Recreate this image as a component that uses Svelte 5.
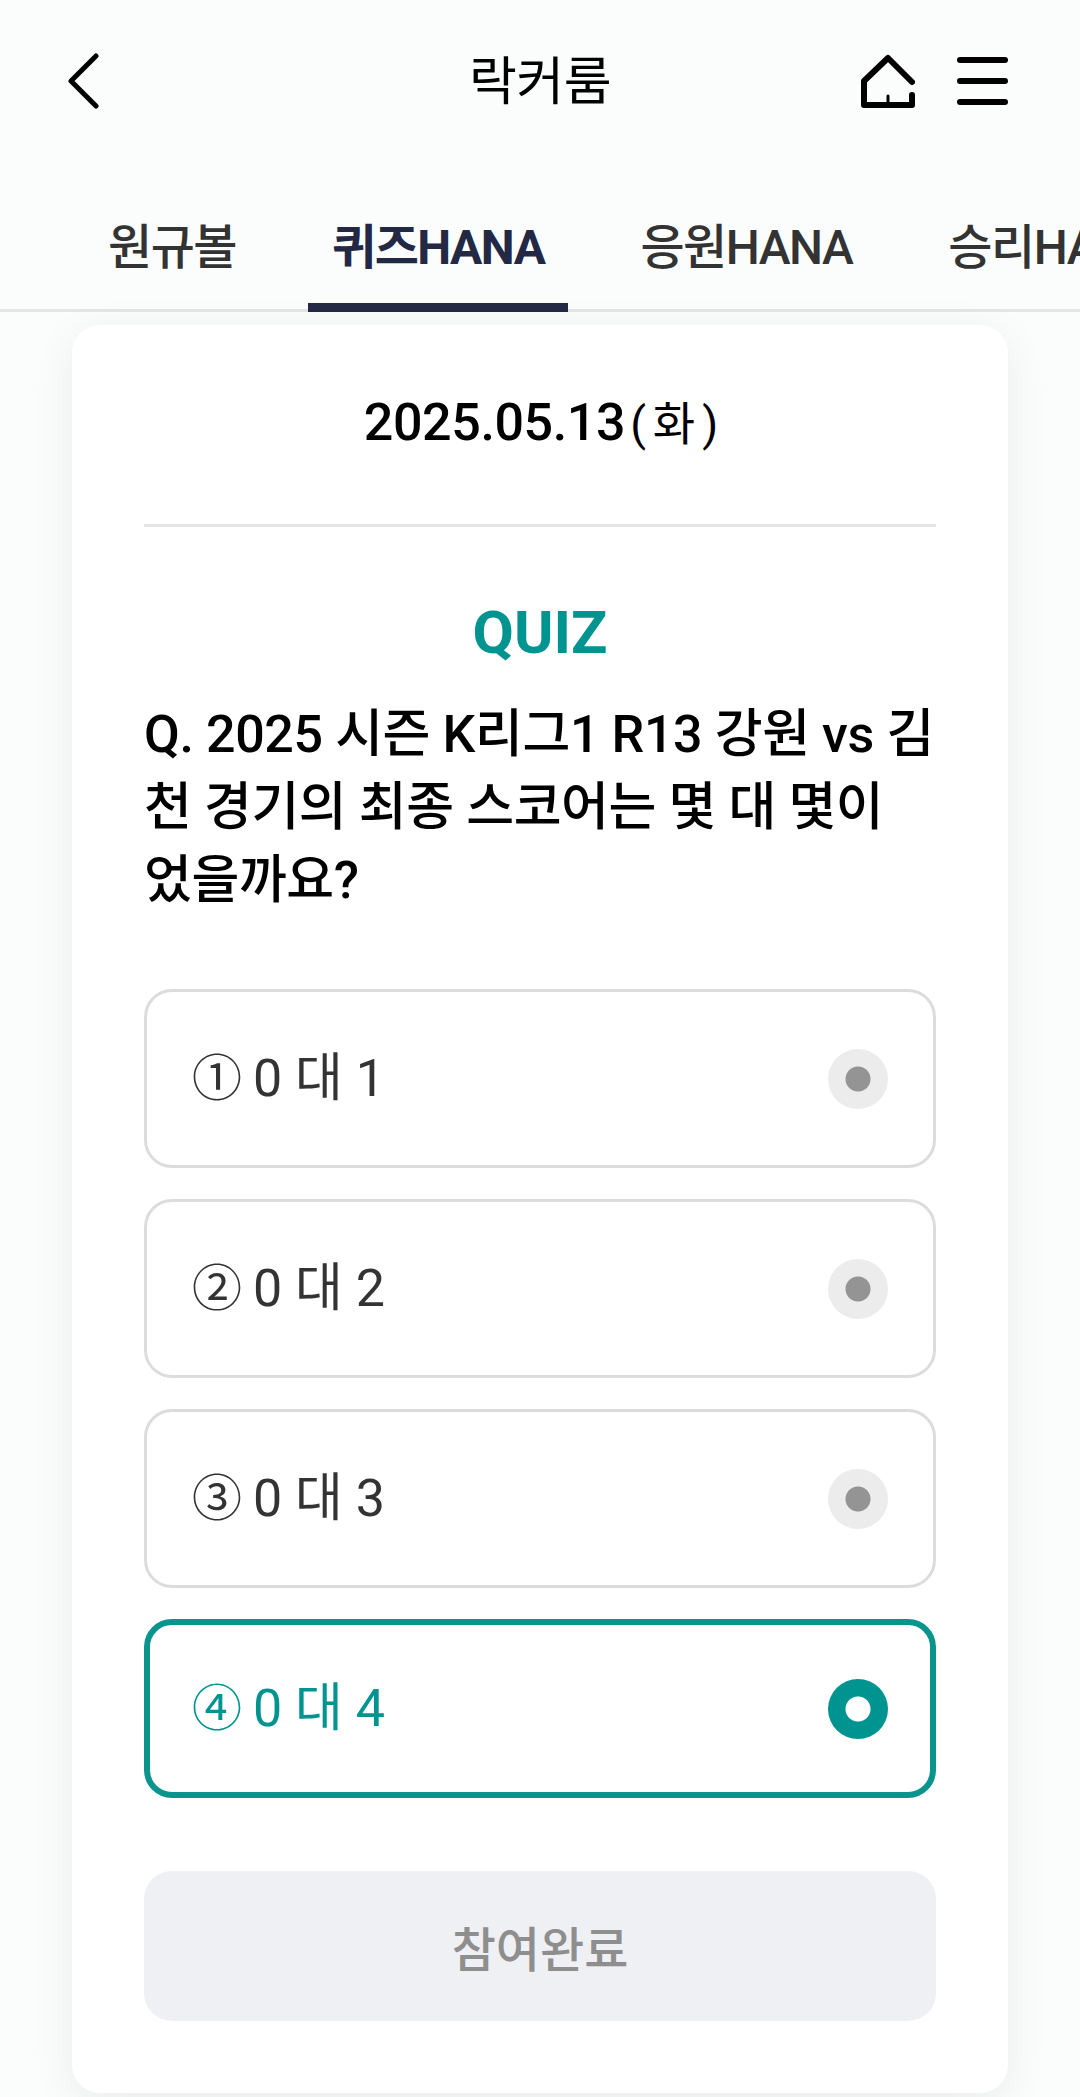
<script>
  const tabs = ['원규볼', '퀴즈HANA', '응원HANA', '승리HANA'];
  const options = [
    { mark: '①', label: '0 대 1' },
    { mark: '②', label: '0 대 2' },
    { mark: '③', label: '0 대 3' },
    { mark: '④', label: '0 대 4' }
  ];
  let selected = 3;
</script>

<div class="page">
  <header class="topbar">
    <svg class="back" viewBox="0 0 36 60" width="36" height="60">
      <path d="M32 7 L7 32 L32 57" fill="none" stroke="#000" stroke-width="5" stroke-linecap="round" stroke-linejoin="round" />
    </svg>
    <h1>락커룸</h1>
    <div class="actions">
      <svg viewBox="0 0 54 54" width="54" height="54">
        <path d="M51 28 L27 4 L3 27 V51 H51 V41" fill="none" stroke="#000" stroke-width="6" stroke-linecap="round" stroke-linejoin="round" />
        <path d="M27 42 V51" fill="none" stroke="#000" stroke-width="3" stroke-linecap="round" />
      </svg>
      <div class="menu">
        <span></span>
        <span></span>
        <span></span>
      </div>
    </div>
  </header>

  <nav class="tabs">
    {#each tabs as tab, i}
      <span class="tab" class:active={i === 1}>{tab}</span>
    {/each}
  </nav>

  <main class="card">
    <div class="date">2025.05.13<span class="day">(화)</span></div>
    <h2>QUIZ</h2>
    <p class="question">Q. 2025 시즌 K리그1 R13 강원 vs 김천 경기의 최종 스코어는 몇 대 몇이 었을까요?</p>

    <div class="options">
      {#each options as opt, i}
        <button class="option" class:selected={i === selected} onclick={() => (selected = i)}>
          <span class="text"><span class="mark">{opt.mark}</span>{opt.label}</span>
          <span class="radio"></span>
        </button>
      {/each}
    </div>

    <button class="submit">참여완료</button>
  </main>
</div>

<style>
  :global(body) {
    background: #f4f5f5;
  }

  .page {
    width: 1080px;
    height: 2097px;
    overflow: hidden;
    background: #fbfdfc;
    font-family: Roboto, "Noto Sans CJK KR", sans-serif;
  }

  .topbar {
    position: relative;
    display: flex;
    align-items: center;
    justify-content: space-between;
    height: 164px;
    padding: 0 72px 0 64px;
    box-sizing: border-box;
  }

  .back {
    margin-bottom: 6px;
  }

  h1 {
    position: absolute;
    left: 0;
    right: 0;
    top: 53px;
    margin: 0;
    text-align: center;
    font-size: 52px;
    line-height: 60px;
    font-weight: 400;
    color: #000;
    letter-spacing: -0.5px;
  }

  .actions {
    display: flex;
    align-items: center;
    gap: 42px;
    margin-bottom: 2px;
  }

  .menu {
    display: flex;
    flex-direction: column;
    gap: 15px;
    width: 51px;
  }

  .menu span {
    height: 6px;
    border-radius: 3px;
    background: #000;
  }

  .tabs {
    display: flex;
    gap: 48px;
    height: 148px;
    padding-left: 84px;
    box-sizing: border-box;
    box-shadow: inset 0 -3px 0 #e4e5e5;
    white-space: nowrap;
    overflow: hidden;
  }

  .tab {
    height: 148px;
    box-sizing: border-box;
    padding: 54px 24px 0;
    font-size: 48px;
    line-height: 60px;
    font-weight: 500;
    letter-spacing: -1.5px;
    color: #333;
  }

  .tab.active {
    font-weight: 700;
    color: #232845;
    border-bottom: 9px solid #232845;
  }

  .card {
    width: 936px;
    height: 1768px;
    margin: 13px 0 0 72px;
    padding: 0 72px;
    box-sizing: border-box;
    background: #fff;
    border-radius: 28px;
    box-shadow: 0 10px 44px rgba(0, 0, 0, 0.07);
  }

  .date {
    height: 202px;
    padding-top: 68px;
    box-sizing: border-box;
    border-bottom: 3px solid #e4e4e4;
    text-align: center;
    font-size: 52px;
    line-height: 60px;
    font-weight: 500;
    letter-spacing: -0.4px;
    color: #000;
  }

  .day {
    margin-left: 5px;
    margin-right: -9px;
    font-size: 46px;
    font-weight: 400;
    letter-spacing: 7px;
  }

  h2 {
    margin: 71px 0 0;
    text-align: center;
    font-size: 60px;
    line-height: 70px;
    font-weight: 700;
    color: #009490;
  }

  .question {
    margin: 30px 0 0;
    font-size: 52px;
    line-height: 73px;
    font-weight: 500;
    color: #000;
    letter-spacing: -0.4px;
    word-break: break-all;
  }

  .options {
    display: flex;
    flex-direction: column;
    gap: 31px;
    margin-top: 72px;
  }

  .option {
    display: flex;
    align-items: center;
    justify-content: space-between;
    height: 179px;
    padding: 0 45px;
    box-sizing: border-box;
    background: #fff;
    border: 3px solid #dcdcdc;
    border-radius: 28px;
    font: inherit;
    color: #333;
  }

  .text {
    display: flex;
    align-items: center;
    padding-bottom: 10px;
    font-size: 52px;
    letter-spacing: 0;
  }

  .mark {
    margin-right: 11px;
    font-size: 50px;
  }

  .radio {
    width: 60px;
    height: 60px;
    border-radius: 50%;
    background: radial-gradient(circle, #949494 12px, #ececec 13px);
  }

  .option.selected {
    border: 6px solid #0a948e;
    padding: 0 42px;
    color: #009490;
  }

  .option.selected .radio {
    background: radial-gradient(circle, #fff 12px, #009490 13px);
  }

  .submit {
    display: block;
    width: 100%;
    height: 150px;
    margin-top: 73px;
    padding-bottom: 2px;
    border: none;
    border-radius: 28px;
    background: #eff0f4;
    color: #8e8e8e;
    font: inherit;
    font-size: 48px;
    font-weight: 500;
  }
</style>
